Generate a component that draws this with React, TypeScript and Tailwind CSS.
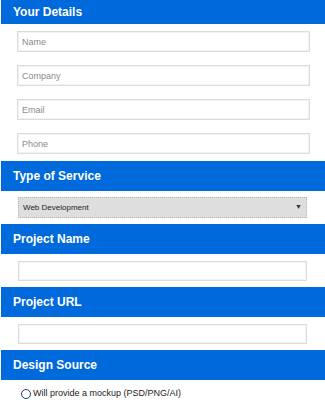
import React from "react";

const font = { fontFamily: '"Liberation Sans", Arial, Helvetica, sans-serif' };

function Header({ title, first }: { title: string; first?: boolean }) {
  return (
    <div
      className={`ml-[1px] ${first ? "h-[24px]" : "h-[30px]"} bg-[#0069dc] flex items-center pl-[12px] text-white font-bold text-[12px]`}
    >
      {title}
    </div>
  );
}

function Field({ placeholder }: { placeholder: string }) {
  return (
    <input
      placeholder={placeholder}
      className="block ml-[17px] w-[293px] h-[21px] border border-[#dcdcdc] bg-white px-[4px] text-[9px] text-[#333] placeholder:text-[#8a8a8a] outline-none shadow-[inset_0_0_0_1px_#f2f2f2]"
      style={font}
    />
  );
}

function Blank() {
  return (
    <input
      className="block ml-[18px] w-[289px] h-[20px] border border-[#dcdcdc] bg-white px-[4px] text-[9px] outline-none shadow-[inset_0_0_0_1px_#f4f4f4]"
      style={font}
    />
  );
}

export default function App() {
  return (
    <div className="w-[325px] h-[400px] overflow-hidden bg-white" style={font}>
      <Header title="Your Details" first />
      <div className="flex flex-col gap-[13px] pt-[7px] pb-[7px]">
        <Field placeholder="Name" />
        <Field placeholder="Company" />
        <Field placeholder="Email" />
        <Field placeholder="Phone" />
      </div>
      <Header title="Type of Service" />
      <div className="pt-[6px] pb-[6px]">
        <div className="ml-[18px] w-[289px] h-[21px] bg-[#dedede] border border-dotted border-[#b5b5b5] flex items-center justify-between pl-[4px] pr-[4px] text-[8px] text-[#222]">
          <span>Web Development</span>
          <span className="text-[7px] text-[#333]">▼</span>
        </div>
      </div>
      <Header title="Project Name" />
      <div className="pt-[7px] pb-[6px]">
        <Blank />
      </div>
      <Header title="Project URL" />
      <div className="pt-[7px] pb-[6px]">
        <Blank />
      </div>
      <Header title="Design Source" />
      <div className="pt-[7px] pl-[21px] flex items-center gap-[2px] text-[9px] text-[#222]">
        <span className="inline-block w-[10px] h-[10px] rounded-full border border-[#1f3d78] bg-white" />
        <span>Will provide a mockup (PSD/PNG/AI)</span>
      </div>
    </div>
  );
}
